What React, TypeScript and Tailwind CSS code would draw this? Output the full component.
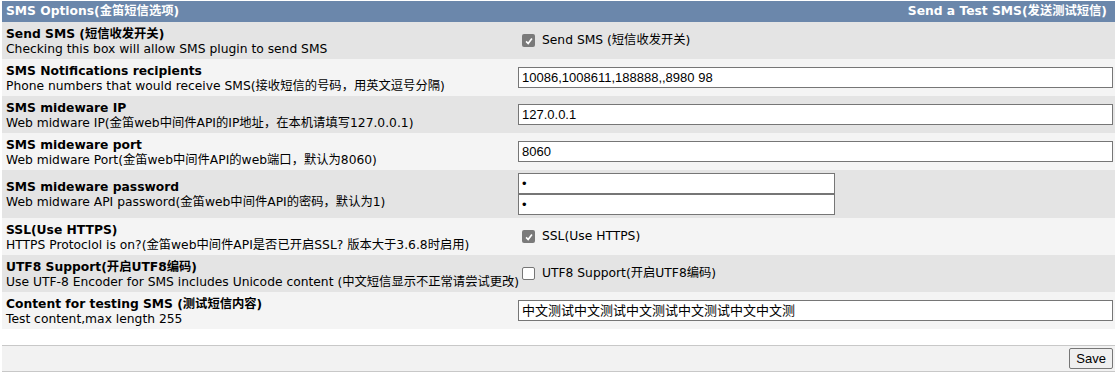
const verdana = "font-['Verdana','DejaVu_Sans','Noto_Sans_CJK_SC',sans-serif]";

function Check({ on }: { on: boolean }) {
  return on ? (
    <span className="inline-flex h-[13px] w-[13px] items-center justify-center rounded-[2px] bg-[#7a7a7a]">
      <svg viewBox="0 0 12 12" className="h-[10px] w-[10px]" fill="none" stroke="#fff" strokeWidth="2">
        <path d="M2.5 6.5 L5 9 L9.5 3" />
      </svg>
    </span>
  ) : (
    <span className="inline-block h-[13px] w-[13px] rounded-[2px] border border-[#767676] bg-white" />
  );
}

function Field({ value, short }: { value: string; short?: boolean }) {
  return (
    <div
      className={`flex h-[21px] items-center border border-[#767676] bg-white px-[3px] text-[13px] text-black font-['Liberation_Sans','Noto_Sans_CJK_SC',sans-serif] ${
        short ? "w-[317px]" : "w-full"
      }`}
    >
      {value}
    </div>
  );
}

type Row = {
  title: string;
  desc: string;
  right: React.ReactNode;
  tall?: boolean;
};

const rows: Row[] = [
  {
    title: "Send SMS (短信收发开关)",
    desc: "Checking this box will allow SMS plugin to send SMS",
    right: (
      <label className="flex items-center gap-[7px] pl-[4px]">
        <Check on />
        <span>Send SMS (短信收发开关)</span>
      </label>
    ),
  },
  {
    title: "SMS Notifications recipients",
    desc: "Phone numbers that would receive SMS(接收短信的号码，用英文逗号分隔)",
    right: <Field value="10086,1008611,188888,,8980 98" />,
  },
  {
    title: "SMS mideware IP",
    desc: "Web midware IP(金笛web中间件API的IP地址，在本机请填写127.0.0.1)",
    right: <Field value="127.0.0.1" />,
  },
  {
    title: "SMS mideware port",
    desc: "Web midware Port(金笛web中间件API的web端口，默认为8060)",
    right: <Field value="8060" />,
  },
  {
    title: "SMS mideware password",
    desc: "Web midware API password(金笛web中间件API的密码，默认为1)",
    tall: true,
    right: (
      <div className="flex flex-col">
        <Field value="•" short />
        <Field value="•" short />
      </div>
    ),
  },
  {
    title: "SSL(Use HTTPS)",
    desc: "HTTPS Protoclol is on?(金笛web中间件API是否已开启SSL? 版本大于3.6.8时启用)",
    right: (
      <label className="flex items-center gap-[7px] pl-[4px]">
        <Check on />
        <span>SSL(Use HTTPS)</span>
      </label>
    ),
  },
  {
    title: "UTF8 Support(开启UTF8编码)",
    desc: "Use UTF-8 Encoder for SMS includes Unicode content (中文短信显示不正常请尝试更改)",
    right: (
      <label className="flex items-center gap-[7px] pl-[4px]">
        <Check on={false} />
        <span>UTF8 Support(开启UTF8编码)</span>
      </label>
    ),
  },
  {
    title: "Content for testing SMS (测试短信内容)",
    desc: "Test content,max length 255",
    right: <Field value="中文测试中文测试中文测试中文测试中文中文测" />,
  },
];

export default function App() {
  return (
    <div className={`w-[1117px] h-[375px] bg-white px-[2px] pt-[1px] text-[12.3px] text-black ${verdana}`}>
      <div className="flex h-[21px] items-center justify-between bg-[#6b87ab] px-[4px] font-bold text-white">
        <span>SMS Options(金笛短信选项)</span>
        <span className="pr-[4px]">Send a Test SMS(发送测试短信)</span>
      </div>
      {rows.map((r, i) => (
        <div
          key={i}
          className={`flex items-center ${r.tall ? "h-[48px]" : "h-[37px]"} ${
            i % 2 === 0 ? "bg-[#e4e4e4]" : "bg-[#f4f4f4]"
          }`}
        >
          <div className="w-[516px] whitespace-nowrap pl-[4px] pt-[2px] leading-[15px]">
            <div className="font-bold">{r.title}</div>
            <div>{r.desc}</div>
          </div>
          <div className="flex-1 pr-[2px]">{r.right}</div>
        </div>
      ))}
      <div className="mt-[16px] flex h-[27px] items-center justify-end border-y border-[#c8c8c8] bg-[#f2f2f2] pr-[2px]">
        <button className="h-[21px] border border-[#767676] rounded-[2px] bg-[#efefef] px-[6px] text-[13px] font-['Liberation_Sans',sans-serif]">
          Save
        </button>
      </div>
    </div>
  );
}
